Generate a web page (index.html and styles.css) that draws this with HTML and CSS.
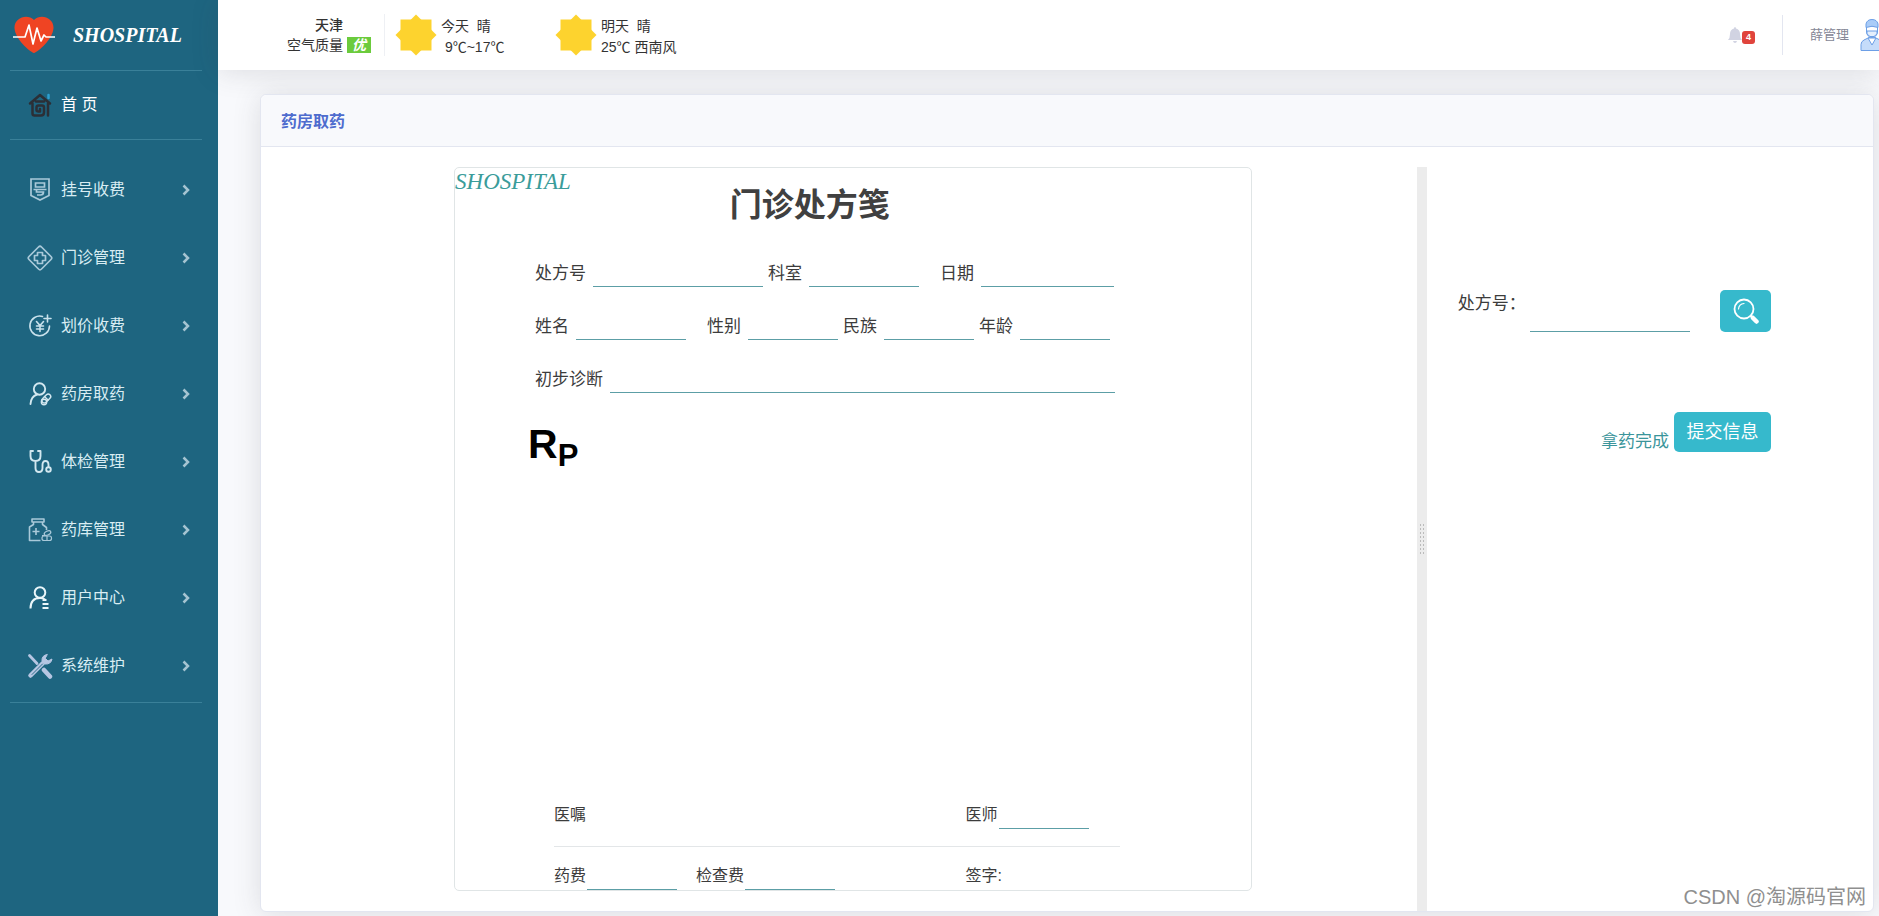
FILE: index.html
```html
<!DOCTYPE html>
<html lang="zh-CN">
<head>
<meta charset="utf-8">
<title>药房取药</title>
<link rel="stylesheet" href="styles.css">
</head>
<body>
<div class="app">
  <aside class="sidebar">
    <a class="brand" href="#">
      <svg class="brand-icon" viewBox="0 0 42 38"><path d="M21 37C17 36 2 23 1.500 12C1 2 14-3 21 4C28-3 41 2 40.500 12C40 23 25 36 21 37Z" fill="#ef4423"/><path d="M0 21h12l4-12 4 19 4-16 4 13 3-6 2 2h9" fill="none" stroke="#fff" stroke-width="1.700" stroke-linejoin="round"/></svg>
      <span class="brand-name">SHOSPITAL</span>
    </a>
    <a class="nav-item nav-home" href="#">
      <svg class="nav-icon" viewBox="0 0 26 26" fill="none" stroke="#2b2f36" stroke-width="2.500" stroke-linecap="round" stroke-linejoin="round"><path d="M21.500 3v3" stroke="#2d9fd0"/><path d="M3 11.500 13 3l10 8.500M5.500 11.500V21.500q0 2 2 2h6.500q3 0 3-3v-5q0-2-2-2h-3.500q-2 0-2 2v2.500q0 1.500 2 1.500h1.500v-2.500M21 11.500v12M9 9.500h8"/></svg>
      <span>首 页</span>
    </a>
    <nav class="nav-list">
      <a class="nav-item" href="#"><svg class="nav-icon" viewBox="0 0 26 26" fill="none" stroke="#a9c9d9" stroke-width="1.700"><path d="M4 2h18v16.500L13 23l-9-4.500zM8.500 6h9v4h-9zM6.500 12.500h13M9.500 12.500v2.500h7q0 3-3 3H10"/></svg><span>挂号收费</span><svg class="chevron" viewBox="0 0 8 12"><path d="m1.500 1.500 4.500 4.500-4.500 4.500"/></svg></a>
      <a class="nav-item" href="#"><svg class="nav-icon" viewBox="0 0 26 26" fill="none" stroke="#a9c9d9" stroke-width="1.700" stroke-linejoin="round"><path d="M11.500 2 2 11.500q-1.500 1.500 0 3L11.500 24q1.500 1.500 3 0l9.500-9.500q1.500-1.500 0-3L14.500 2q-1.500-1.500-3 0z"/><path d="M10.500 7.500h5v3h3v5h-3v3h-5v-3h-3v-5h3z"/></svg><span>门诊管理</span><svg class="chevron" viewBox="0 0 8 12"><path d="m1.500 1.500 4.500 4.500-4.500 4.500"/></svg></a>
      <a class="nav-item" href="#"><svg class="nav-icon" viewBox="0 0 26 26" fill="none" stroke="#c9e2ec" stroke-width="1.600" stroke-linecap="round"><path d="M15.500 3.500A9.800 9.800 0 1 0 22.500 13M20.500 2v7M17 5.500h7M9.500 8.500l3.500 4 3.500-4M13 12.500v6M9.500 13h7M9.500 16h7"/></svg><span>划价收费</span><svg class="chevron" viewBox="0 0 8 12"><path d="m1.500 1.500 4.500 4.500-4.500 4.500"/></svg></a>
      <a class="nav-item" href="#"><svg class="nav-icon" viewBox="0 0 26 26" fill="none" stroke="#d3e8f0" stroke-width="1.900" stroke-linecap="round"><circle cx="12.500" cy="8" r="5.700"/><path d="M3.500 23q.5-7.500 6.500-9.500"/><g stroke-width="1.400"><rect x="14" y="15" width="10.500" height="5" rx="2.500" transform="rotate(-45 19.250 17.500)"/><path d="m17.500 15.500 3.500 3.500"/><circle cx="17" cy="21" r="2.700"/></g></svg><span>药房取药</span><svg class="chevron" viewBox="0 0 8 12"><path d="m1.500 1.500 4.500 4.500-4.500 4.500"/></svg></a>
      <a class="nav-item" href="#"><svg class="nav-icon" viewBox="0 0 26 26" fill="none" stroke="#d3e8f0" stroke-width="1.900" stroke-linecap="round" stroke-linejoin="round"><path d="M6 2H3.500v5q0 5 5 5t5-5V2H11M8.500 12v7q0 4 3.500 4t3.500-4v-3q0-4 3-4t3 4v2"/><circle cx="21.500" cy="20.500" r="2.300"/></svg><span>体检管理</span><svg class="chevron" viewBox="0 0 8 12"><path d="m1.500 1.500 4.500 4.500-4.500 4.500"/></svg></a>
      <a class="nav-item" href="#"><svg class="nav-icon" viewBox="0 0 26 26" fill="none" stroke="#a9c9d9" stroke-width="1.600" stroke-linejoin="round"><path d="M5 2h12v3H5zM6.500 5v2.500L2.500 10v13.500h11M15.500 5v2.500l4 3v2.500M9 11v7M5.500 14.500h7"/><g stroke-width="1.200"><ellipse cx="20.500" cy="16" rx="3.500" ry="2" transform="rotate(-25 20.500 16)"/><rect x="15" y="19" width="9.500" height="4.500" rx="2"/><path d="M15 18.500h4M20 19v4.500"/></g></svg><span>药库管理</span><svg class="chevron" viewBox="0 0 8 12"><path d="m1.500 1.500 4.500 4.500-4.500 4.500"/></svg></a>
      <a class="nav-item" href="#"><svg class="nav-icon" viewBox="0 0 26 26" fill="none" stroke="#e9f6fa" stroke-width="2"><circle cx="13" cy="7.500" r="5.300"/><path d="M3.500 23.500q0-10.500 9.500-10.500 3 0 5 1.500M15.500 15h4M15.500 19h6M15.500 23h6"/></svg><span>用户中心</span><svg class="chevron" viewBox="0 0 8 12"><path d="m1.500 1.500 4.500 4.500-4.500 4.500"/></svg></a>
      <a class="nav-item" href="#"><svg class="nav-icon" viewBox="0 0 26 26" fill="none" stroke="#b6c6e2" stroke-linecap="round"><path d="M2.500 2.500 10 10.500" stroke-width="2.800"/><path d="m17 17 6 6.500" stroke-width="4.500"/><path d="M3.500 22.500 17 9" stroke-width="4.500"/><path d="M5 21.500 15.500 11" stroke="#1e6580" stroke-width=".9"/><path d="M20 1.500q-5.500 1-5 6.500L18 11q6 .5 7-5l-4 2-2.500-2.500z" fill="#b6c6e2" stroke-width="1" stroke-linejoin="round"/></svg><span>系统维护</span><svg class="chevron" viewBox="0 0 8 12"><path d="m1.500 1.500 4.500 4.500-4.500 4.500"/></svg></a>
    </nav>
  </aside>

  <div class="main">
    <header class="topbar">
      <section class="city">
        <strong class="city-name">天津</strong>
        <div class="air">空气质量 <em class="air-badge">优</em></div>
      </section>
      <section class="forecast">
        <svg class="sun" viewBox="0 0 42 42"><path d="M5.500 5.500h31v31h-31z" fill="#fdd32e"/><path d="M6.500 6.500h29v29h-29z" transform="rotate(45 21 21)" fill="#fdd32e"/></svg>
        <div class="forecast-text"><span>今天&nbsp; 晴</span><span>&nbsp;9℃~17℃</span></div>
      </section>
      <section class="forecast">
        <svg class="sun" viewBox="0 0 42 42"><path d="M5.500 5.500h31v31h-31z" fill="#fdd32e"/><path d="M6.500 6.500h29v29h-29z" transform="rotate(45 21 21)" fill="#fdd32e"/></svg>
        <div class="forecast-text"><span>明天&nbsp; 晴</span><span>25℃ 西南风</span></div>
      </section>
      <div class="account">
        <button class="bell" type="button" aria-label="通知">
          <svg class="bell-icon" viewBox="0 0 14 16"><path d="M7 0q1 0 1 1.500 4 1 4 5.500 0 4 2 6H0q2-2 2-6 0-4.500 4-5.500Q6 0 7 0zM5 14h4q-.5 2-2 2t-2-2z" fill="#d1d3e2"/></svg>
          <span class="bell-count">4</span>
        </button>
        <a class="user" href="#">
          <span>薛管理</span>
          <svg class="avatar" viewBox="0 0 24 32" stroke="#6d9fe6" stroke-width="1" stroke-linejoin="round"><path d="M1 31.500v-6q0-3 3-4.500l5-2.500h6l5 2.500q3 1.500 3 4.500v6z" fill="#c5dcfa"/><path d="m8 19 4 7 4-7z" fill="#fff"/><path d="M6.500 7v6q1 5.500 5.500 5.500t5.500-5.500V7z" fill="#fff"/><path d="M7 12h10v3l-3 2.500h-4L7 15z" fill="#e4effd"/><path d="M6 8.500V5q1-4.500 6-4.500T18 5v3.500q-6-2.500-12 0z" fill="#a9ccf8"/></svg>
        </a>
      </div>
    </header>

    <main class="card">
      <h1 class="card-title">药房取药</h1>
      <div class="split">
        <div class="pane-left">
          <form class="sheet">
            <span class="sheet-logo">SHOSPITAL</span>
            <h2 class="sheet-title">门诊处方笺</h2>
            <div class="rows">
              <div class="row">
                <label for="rx">处方号</label><input id="rx" class="line w170">
                <label for="dept">科室</label><input id="dept" class="line w110">
                <label for="date" class="spaced">日期</label><input id="date" class="line w133">
              </div>
              <div class="row">
                <label for="name">姓名</label><input id="name" class="line w110">
                <label for="sex" class="spaced">性别</label><input id="sex" class="line w90">
                <label for="nation">民族</label><input id="nation" class="line w90">
                <label for="age">年龄</label><input id="age" class="line w90">
              </div>
              <div class="row">
                <label for="diag">初步诊断</label><input id="diag" class="line w505">
              </div>
            </div>
            <div class="rp">R<span class="rp-small">P</span></div>
            <div class="sheet-foot">
              <div class="foot-row foot-notes">
                <div class="foot-left">医嘱</div>
                <div class="foot-right"><label for="doc">医师</label><input id="doc" class="line w90"></div>
              </div>
              <div class="foot-row">
                <div class="foot-left"><label for="fee">药费</label><input id="fee" class="line w90"><label for="exam" class="spaced">检查费</label><input id="exam" class="line w90"></div>
                <div class="foot-right">签字:</div>
              </div>
            </div>
          </form>
        </div>
        <div class="splitter"><span class="grip"></span></div>
        <form class="pane-right">
          <div class="search">
            <label for="query">处方号：</label><input id="query" class="line search-input">
            <button class="btn btn-search" type="button" aria-label="搜索"><svg class="lens" viewBox="0 0 26 26" fill="none" stroke="#fff" stroke-linecap="round"><circle cx="11" cy="11" r="9.500" stroke-width="1.800"/><path d="M5.500 11Q6 6 11 5.500" stroke-width="1.200"/><path d="m18 18 1.500 1.500" stroke-width="2.500"/><path d="m20 20 3.500 3.500" stroke-width="4.500"/></svg></button>
          </div>
          <div class="submit">
            <a class="done" href="#">拿药完成</a>
            <button class="btn btn-submit" type="button">提交信息</button>
          </div>
        </form>
      </div>
    </main>
  </div>
</div>
<div class="watermark">CSDN @淘源码官网</div>
</body>
</html>
```

FILE: styles.css
```css
* { box-sizing: border-box; }
body {
  margin: 0;
  overflow: hidden;
  background: #f8f9fc;
  color: #3c3c3c;
  font: 16px/24px "Liberation Sans", "Noto Sans CJK SC", sans-serif;
}
a { color: inherit; text-decoration: none; }
h1, h2 { margin: 0; }
button { font: inherit; border: 0; padding: 0; cursor: pointer; }
.app { display: flex; min-height: 100vh; }

.sidebar {
  flex: 0 0 218px;
  padding: 0 16px 0 10px;
  background: #1e6580;
  color: #d9edf3;
}
.brand {
  display: flex;
  align-items: center;
  gap: 18px;
  height: 71px;
  padding-left: 3px;
  border-bottom: 1px solid #3a8099;
}
.brand-icon { width: 42px; height: 38px; }
.brand-name {
  color: #fff;
  font: italic bold 20px/24px "Liberation Serif", serif;
}
.nav-item {
  display: flex;
  align-items: center;
  gap: 8px;
  height: 68px;
  padding: 0 12px 0 17px;
}
.nav-home {
  height: 69px;
  border-bottom: 1px solid #3a8099;
  color: #fff;
}
.nav-list {
  padding: 16px 0 2px;
  border-bottom: 1px solid #3a8099;
}
.nav-icon { width: 26px; height: 26px; }
.chevron {
  width: 8px;
  height: 12px;
  margin-left: auto;
  fill: none;
  stroke: #a5c4d1;
  stroke-width: 2.5;
}

.main { flex: 1; min-width: 0; display: flex; flex-direction: column; }
.topbar {
  flex: 0 0 70px;
  display: flex;
  align-items: center;
  padding-left: 69px;
  background: #fff;
  box-shadow: 0 2px 28px rgba(58, 59, 69, .15);
  font-size: 14px;
  line-height: 20px;
  white-space: nowrap;
  color: #333;
}
.city {
  width: 98px;
  height: 42px;
  margin-right: 10px;
  padding-top: 1px;
  border-right: 1px solid #eef0f4;
}
.city-name { display: block; width: 84px; text-align: center; font-weight: 500; }
.air { display: flex; align-items: center; gap: 4px; }
.air-badge {
  width: 24px;
  background: #6bcb3d;
  color: #fff;
  text-align: center;
  font-weight: bold;
  line-height: 16px;
}
.forecast { display: flex; align-items: center; gap: 4px; width: 160px; }
.sun { width: 42px; height: 42px; }
.forecast-text { display: flex; flex-direction: column; padding-top: 4px; line-height: 21px; }
.account {
  display: flex;
  align-items: center;
  margin: 0 -5px 0 auto;
  color: #858796;
  font-size: 13px;
}
.bell { display: flex; align-items: center; background: none; padding-right: 27px; }
.bell-icon { width: 14px; height: 16px; }
.bell-count {
  width: 13px;
  margin-top: 4px;
  border-radius: 3px;
  background: #e0443c;
  color: #fff;
  font-size: 9px;
  font-weight: bold;
  line-height: 13px;
}
.user {
  display: flex;
  align-items: center;
  gap: 11px;
  height: 40px;
  padding-left: 27px;
  border-left: 1px solid #e3e6f0;
}
.avatar { width: 24px; height: 32px; }

.card {
  flex: 1;
  display: flex;
  flex-direction: column;
  margin: 24px 5px 4px 42px;
  border: 1px solid #e3e6f0;
  border-radius: 6px;
  background: #fff;
  box-shadow: 0 2px 28px rgba(58, 59, 69, .15);
}
.card-title {
  padding: 15px 20px 12px;
  border-bottom: 1px solid #e3e6f0;
  border-radius: 6px 6px 0 0;
  background: #f8f9fc;
  color: #4e6cce;
  font-size: 16px;
  font-weight: bold;
}
.split { flex: 1; display: flex; padding-top: 20px; }
.pane-left { flex: 0 0 71.7%; display: flex; padding-bottom: 20px; }
.sheet {
  width: 69%;
  margin-left: 16.7%;
  display: flex;
  flex-direction: column;
  border: 1px solid #e0e5e6;
  border-radius: 5px;
}
.sheet-logo {
  height: 21px;
  color: #3a9c9a;
  font: italic 23px/28px "Liberation Serif", serif;
}
.sheet-title {
  padding-right: 86px;
  text-align: center;
  font-size: 32px;
  line-height: 32px;
  color: #404040;
}
.rows {
  display: flex;
  flex-direction: column;
  gap: 19px;
  padding: 32px 0 0 80px;
  font-size: 17px;
}
.row { display: flex; height: 34px; }
.row label { margin-right: 7px; line-height: 42px; }
.row .line { margin-right: 5px; }
.row .line + .spaced { margin-left: 16px; }
.line {
  height: 34px;
  padding: 0;
  border: 0;
  border-bottom: 1px solid #5c9ea6;
  background: none;
  font: inherit;
  outline: none;
}
.w90 { width: 90px; }
.w110 { width: 110px; }
.w133 { width: 133px; }
.w170 { width: 170px; }
.w505 { width: 505px; }
.rp {
  padding: 27px 0 0 73px;
  color: #000;
  font-size: 41px;
  font-weight: bold;
  line-height: 48px;
}
.rp-small { font-size: 31px; vertical-align: -8px; line-height: 32px; }
.sheet-foot { margin: auto 131px 0 99px; }
.foot-row { display: flex; height: 43px; padding-top: 13px; line-height: 32px; }
.foot-notes { height: 53px; padding-top: 0; border-bottom: 1px solid #e3e6e8; line-height: 42px; }
.foot-left { flex: 1; display: flex; }
.foot-right { width: 154px; display: flex; }
.foot-row .line { height: 30px; margin-left: 1px; }
.foot-notes .line { height: 35px; }
.foot-left .spaced { margin-left: 19px; }

.splitter {
  flex: 0 0 10px;
  display: flex;
  align-items: center;
  justify-content: center;
  background: #ececec;
}
.grip {
  width: 6px;
  height: 32px;
  background: radial-gradient(circle, #bbb 1px, transparent 1px) 0 0 / 3px 4px;
}
.pane-right { flex: 1; padding: 123px 102px 0 31px; font-size: 17px; }
.search { display: flex; align-items: flex-start; }
.search label { line-height: 28px; }
.search-input { width: 160px; height: 42px; margin: 0 auto 0 4px; }
.btn { border-radius: 5px; background: #36b9cc; color: #fff; }
.btn-search { display: flex; align-items: center; justify-content: center; width: 51px; height: 42px; }
.lens { width: 26px; height: 26px; }
.submit { display: flex; justify-content: flex-end; gap: 5px; margin-top: 80px; }
.done { padding-top: 18px; color: #3a959b; }
.btn-submit { width: 97px; height: 40px; font-size: 18px; }

.watermark {
  position: absolute;
  right: 13px;
  bottom: 5px;
  color: #8f8f8f;
  font-size: 20px;
  line-height: 28px;
  text-shadow: -1px -1px #fff;
}
```
